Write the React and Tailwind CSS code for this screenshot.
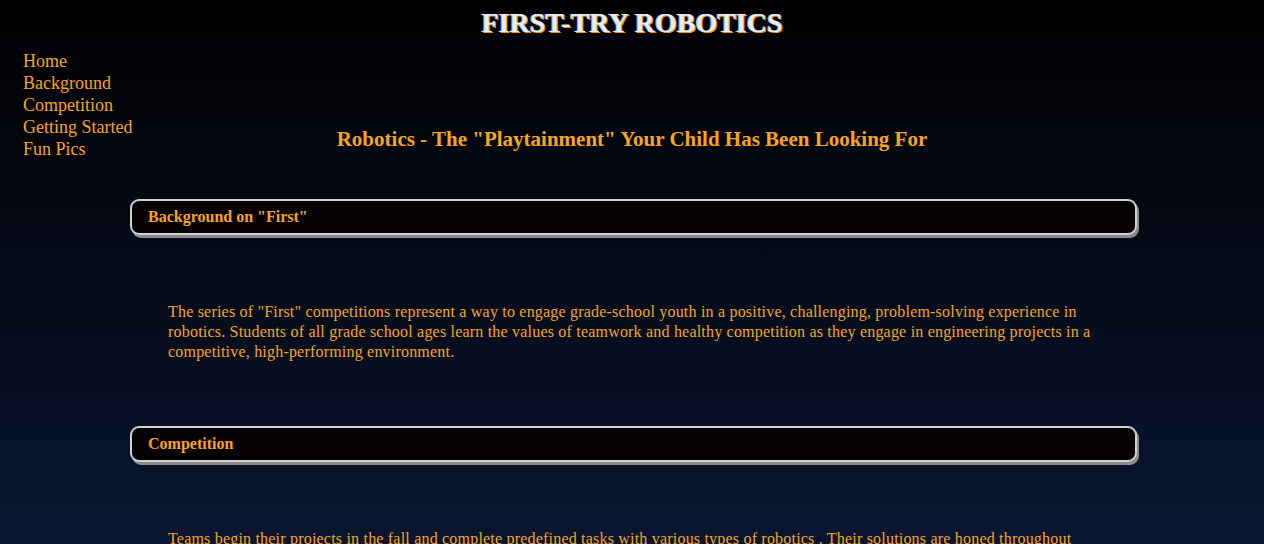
import React from "react";

const serif = { fontFamily: '"Liberation Serif", "DejaVu Serif", serif' };

function SectionBox({ title }) {
  return (
    <div className="ml-[130px] mr-[127px] rounded-[9px] border-2 border-[#d0d0d0] bg-[#050002] px-4 py-[5px] shadow-[2px_3px_0_#8a8a8a]">
      <h2 className="text-[16px] font-bold leading-[22px] text-[#f7a51c]">{title}</h2>
    </div>
  );
}

export default function App() {
  return (
    <div
      className="min-h-screen bg-[linear-gradient(to_bottom,#000000_0px,#0a1631_544px)] text-[#f7a51c]"
      style={serif}
    >
      <h1 className="pt-[6px] text-center text-[28px] font-bold leading-[34px] text-[#ececec] [text-shadow:-1px_0_#6fa8ff,1px_1px_#f59a00]">
        FIRST-TRY ROBOTICS
      </h1>
      <div className="grid grid-cols-[1fr_auto_1fr]">
        <nav className="flex flex-col pl-[23px] pt-[10px] text-[18px] leading-[22px]">
          <a>Home</a>
          <a>Background</a>
          <a>Competition</a>
          <a>Getting Started</a>
          <a>Fun Pics</a>
        </nav>
        <h2 className="pt-[86px] text-center text-[21px] font-bold leading-[26px]">
          Robotics - The "Playtainment" Your Child Has Been Looking For
        </h2>
        <div />
      </div>
      <div className="pt-[39px]">
        <SectionBox title={'Background on "First"'} />
        <p className="ml-[168px] mr-[171px] pt-[67px] text-[16px] leading-[20px] tracking-[0.2px]">
          The series of "First" competitions represent a way to engage grade-school youth in a positive, challenging, problem-solving experience in robotics. Students of all grade school ages learn the values of teamwork and healthy competition as they engage in engineering projects in a competitive, high-performing environment.
        </p>
        <div className="pt-[64px]">
          <SectionBox title="Competition" />
        </div>
        <p className="ml-[168px] mr-[171px] pt-[67px] text-[16px] leading-[20px] tracking-[0.2px]">
          Teams begin their projects in the fall and complete predefined tasks with various types of robotics . Their solutions are honed throughout the season as they prepare for regional and national competitions.
        </p>
      </div>
    </div>
  );
}
